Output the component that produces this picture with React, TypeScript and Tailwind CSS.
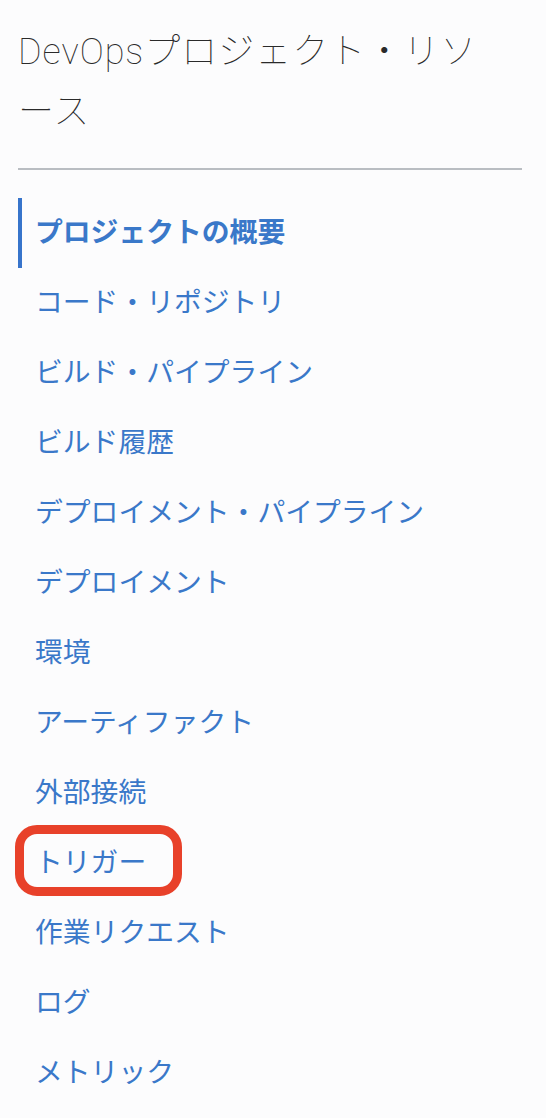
import React from 'react';

const items = [
  'コード・リポジトリ',
  'ビルド・パイプライン',
  'ビルド履歴',
  'デプロイメント・パイプライン',
  'デプロイメント',
  '環境',
  'アーティファクト',
  '外部接続',
  'トリガー',
  '作業リクエスト',
  'ログ',
  'メトリック',
];

const App = () => {
  return (
    <div className="min-h-screen bg-[#fcfcfd] px-[18px] pt-[22px] font-['Roboto','Noto_Sans_CJK_JP',sans-serif]">
      {/* Title */}
      <h1 className="w-[486px] text-[36px] font-thin leading-[60px] tracking-[1px] text-[#2a2a2a]">
        DevOpsプロジェクト・リソース
      </h1>

      <div className="mt-[26px] h-[2px] w-[504px] bg-[#b9bdc2]" />

      <nav className="mt-[28px] flex flex-col">
        <a className="flex h-[70px] items-center border-l-4 border-[#3774cb] pl-[13px] text-[27.8px] font-bold text-[#3a78c9]">
          プロジェクトの概要
        </a>
        {items.map((label) => (
          <a
            key={label}
            className="relative flex h-[70px] items-center pl-[17px] text-[27.8px] text-[#3a78c9]"
          >
            {label}
            {label === 'トリガー' && (
              <span className="absolute left-[-3px] top-[-3px] h-[71px] w-[167px] rounded-[22px] border-[9px] border-[#e8412a]" />
            )}
          </a>
        ))}
      </nav>
    </div>
  );
};

export default App;
